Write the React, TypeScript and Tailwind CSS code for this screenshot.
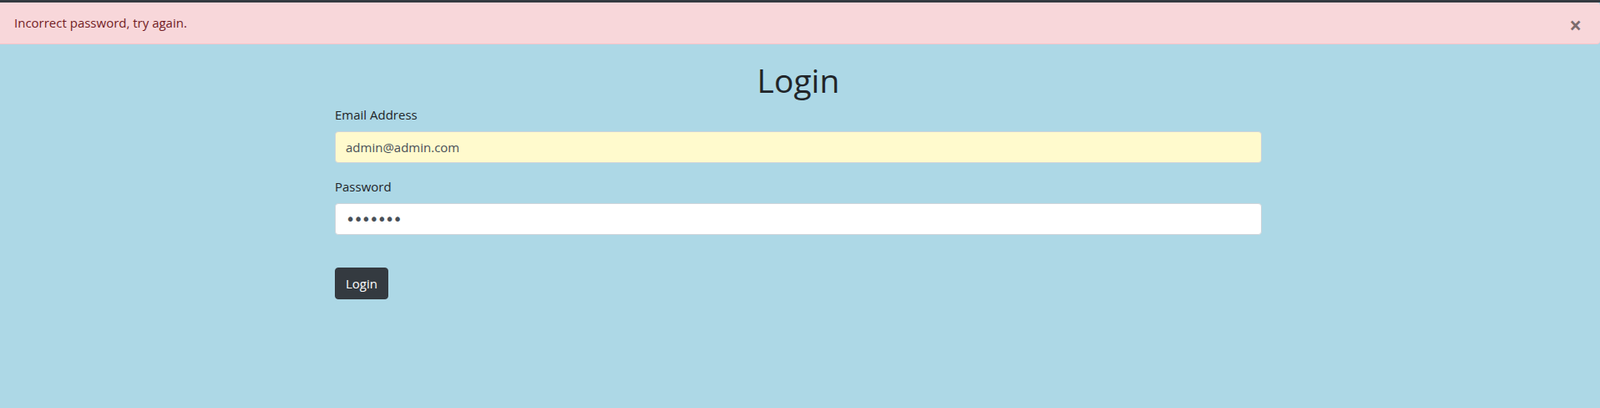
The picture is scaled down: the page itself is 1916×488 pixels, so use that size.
import React from 'react';

export default function App() {
  return (
    <div className="min-h-[488px] bg-[#add8e6] font-['Open_Sans',sans-serif] text-[#212529]">
      <div className="h-[3px] bg-[#343a40]" />

      <div className="flex items-center justify-between h-[50px] pl-[17px] pr-[22px] bg-[#f8d7da] border-b border-[#f5c6cb] rounded-r-[4px] text-[#721c24] text-[15px]">
        <span>Incorrect password, try again.</span>
        <button className="pt-[4px] text-[26px] leading-none font-bold text-black/50">×</button>
      </div>

      <div className="flex justify-center pr-[4px] mt-[16px]">
        <div className="w-[1110px]">
          <h1 className="text-center text-[39px] leading-[48px] font-normal pt-[3px] mb-[5px]">Login</h1>

          <form>
            <div className="mb-[16px]">
              <label className="block text-[15px] leading-[24px] mb-[8px]">Email Address</label>
              <input
                type="email"
                defaultValue="admin@admin.com"
                className="w-full h-[38px] px-[12px] rounded-[4px] border border-[#ced4da] bg-[#fffacd] text-[15px] text-[#495057] outline-none"
              />
            </div>
            <div className="mb-[16px]">
              <label className="block text-[15px] leading-[24px] mb-[8px]">Password</label>
              <input
                type="password"
                defaultValue="1234567"
                className="w-full h-[38px] px-[12px] rounded-[4px] border border-[#ced4da] bg-white font-['DejaVu_Sans',sans-serif] text-[19px] tracking-[-1.8px] text-[#495057] outline-none"
              />
            </div>
            <button
              type="button"
              className="mt-[23px] h-[38px] px-[12px] rounded-[4px] bg-[#343a40] border border-[#343a40] text-white text-[15px]"
            >
              Login
            </button>
          </form>
        </div>
      </div>
    </div>
  );
}
